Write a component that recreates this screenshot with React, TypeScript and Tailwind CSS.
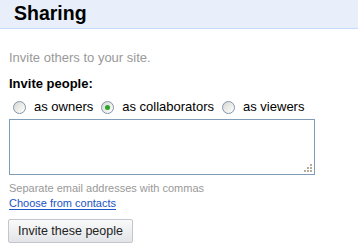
import React from 'react'

const font = { fontFamily: '"Liberation Sans", Arial, sans-serif' }

const Radio: React.FC<{ checked?: boolean; label: string }> = ({ checked, label }) => (
  <label className="flex items-center">
    <span className="w-[13px] h-[13px] rounded-full border border-[#8294ab] bg-gradient-to-br from-[#d8d8d2] to-[#ffffff] flex items-center justify-center">
      {checked && <span className="w-[5px] h-[5px] rounded-full bg-[#2aa52a]" />}
    </span>
    <span className="ml-[8px] text-[13px] text-black">{label}</span>
  </label>
)

export default function App() {
  return (
    <div className="w-[358px] h-[243px] bg-white overflow-hidden" style={font}>
      <div className="h-[29px] bg-[#e8effa] border-b border-[#c3d9ff] pl-[14px] flex items-center">
        <h1 className="text-[19.5px] font-bold text-black leading-none">Sharing</h1>
      </div>
      <div className="pl-[9px]">
        <p className="mt-[21px] text-[13px] leading-[16px] text-[#999999]">Invite others to your site.</p>
        <p className="mt-[10px] text-[13px] leading-[16px] font-bold text-black">Invite people:</p>
        <div className="mt-[8px] ml-[4px] flex items-center gap-[8px] h-[14px]">
          <Radio label="as owners" />
          <Radio checked label="as collaborators" />
          <Radio label="as viewers" />
        </div>
        <div className="mt-[5px] relative w-[306px] h-[56px] border border-[#7f9db9] bg-white">
          <div className="absolute right-[2px] bottom-[2px] grid grid-cols-3 gap-[1px]">
            <span className="w-[2px] h-[2px]" />
            <span className="w-[2px] h-[2px]" />
            <span className="w-[2px] h-[2px] bg-[#b5ad9c]" />
            <span className="w-[2px] h-[2px]" />
            <span className="w-[2px] h-[2px] bg-[#b5ad9c]" />
            <span className="w-[2px] h-[2px] bg-[#b5ad9c]" />
            <span className="w-[2px] h-[2px] bg-[#b5ad9c]" />
            <span className="w-[2px] h-[2px] bg-[#b5ad9c]" />
            <span className="w-[2px] h-[2px] bg-[#b5ad9c]" />
          </div>
        </div>
        <p className="mt-[7px] text-[11px] leading-[13px] text-[#999999]">Separate email addresses with commas</p>
        <a className="mt-[1px] block w-fit text-[11px] leading-[14px] text-[#1a55c4] underline underline-offset-2">Choose from contacts</a>
        <button className="mt-[9px] -ml-[1px] h-[24px] w-[125px] border border-[#c3c6cb] rounded-[2px] bg-gradient-to-b from-[#fafafa] to-[#e2e4e8] text-[12.5px] text-[#222222]">
          Invite these people
        </button>
      </div>
    </div>
  )
}
